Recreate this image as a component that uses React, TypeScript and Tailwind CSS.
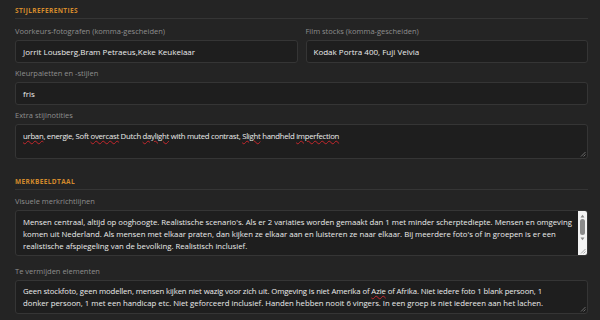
import React from 'react';

const font = { fontFamily: '"Open Sans", "Noto Sans", sans-serif' };

function SectionTitle({ children }: { children: React.ReactNode }) {
  return (
    <div className="border-b border-[#353535] pb-[3px]">
      <div className="text-[6.5px] font-bold uppercase tracking-[0.06em] text-[#d38a2c] leading-[9px]">{children}</div>
    </div>
  );
}

function Label({ children }: { children: React.ReactNode }) {
  return <div className="text-[7.5px] leading-[10px] text-[#8e8e8e]">{children}</div>;
}

function Input({ value }: { value: string }) {
  return (
    <div className="h-[23px] rounded-[3px] border border-[#353535] bg-[#1e1e1e] px-[7px] flex items-center text-[8px] text-[#ececec] whitespace-nowrap">
      {value}
    </div>
  );
}

function Grip() {
  return (
    <svg className="absolute right-[1px] bottom-[1px]" width="6" height="6" viewBox="0 0 6 6">
      <path d="M5.5 1 L1 5.5 M5.5 3.5 L3.5 5.5" stroke="#8a8a8a" strokeWidth="0.7" />
    </svg>
  );
}

function Wavy({ children }: { children: React.ReactNode }) {
  return <span className="underline decoration-wavy decoration-[#c4262b] decoration-[0.5px] underline-offset-[1px]">{children}</span>;
}

function Area({ lines, className, scroll }: { lines: React.ReactNode[]; className: string; scroll?: boolean }) {
  return (
    <div className={`relative rounded-[3px] border border-[#353535] bg-[#1e1e1e] pl-[7px] pr-[11px] text-[7.75px] leading-[12px] text-[#ececec] overflow-hidden ${className}`}>
      {lines.map((l, i) => (
        <div key={i} className="whitespace-nowrap">{l}</div>
      ))}
      {scroll && (
        <div className="absolute right-0 top-0 bottom-0 w-[9px] bg-[#f3f3f3] flex flex-col items-center pt-[3px]">
          <svg width="5" height="4" viewBox="0 0 5 4"><path d="M0.5 3.5 L2.5 0.8 L4.5 3.5 Z" fill="#8a8a8a" /></svg>
          <div className="mt-[1px] w-[5px] h-[16px] rounded-[3px] bg-[#8b8b8b]" />
          <svg className="mt-[2px]" width="5" height="4" viewBox="0 0 5 4"><path d="M0.5 0.5 L2.5 3.2 L4.5 0.5 Z" fill="#8a8a8a" /></svg>
        </div>
      )}
      <Grip />
    </div>
  );
}

export default function App() {
  return (
    <div className="w-[600px] h-[320px] overflow-hidden bg-[#242424] pl-[15px] pr-[12px] pt-[6px]" style={font}>
      <SectionTitle>Stijlreferenties</SectionTitle>

      <div className="mt-[7px] grid grid-cols-2 gap-[8px]">
        <div>
          <Label>Voorkeurs-fotografen (komma-gescheiden)</Label>
          <div className="mt-[4px]"><Input value="Jorrit Lousberg,Bram Petraeus,Keke Keukelaar" /></div>
        </div>
        <div>
          <Label>Film stocks (komma-gescheiden)</Label>
          <div className="mt-[4px]"><Input value="Kodak Portra 400, Fuji Velvia" /></div>
        </div>
      </div>

      <div className="mt-[5px]">
        <Label>Kleurpaletten en -stijlen</Label>
        <div className="mt-[4px]"><Input value="fris" /></div>
      </div>

      <div className="mt-[5px]">
        <Label>Extra stijlnotities</Label>
        <Area
          className="mt-[4px] h-[35px] pt-[5px]"
          lines={[
            <span className="tracking-[-0.035em]">
              <Wavy>urban</Wavy>, energie, Soft <Wavy>overcast</Wavy> Dutch <Wavy>daylight</Wavy> with muted contrast, <Wavy>Slight</Wavy> handheld <Wavy>imperfection</Wavy>
            </span>,
          ]}
        />
      </div>

      <div className="mt-[18px]">
        <SectionTitle>Merkbeeldtaal</SectionTitle>
      </div>

      <div className="mt-[6px]">
        <Label>Visuele merkrichtlijnen</Label>
        <Area
          scroll
          className="mt-[4px] h-[46px] pt-[5px]"
          lines={[
            "Mensen centraal, altijd op ooghoogte. Realistische scenario's. Als er 2 variaties worden gemaakt dan 1 met minder scherptediepte. Mensen en omgeving",
            "komen uit Nederland. Als mensen met elkaar praten, dan kijken ze elkaar aan en luisteren ze naar elkaar. Bij meerdere foto's of in groepen is er een",
            'realistische afspiegeling van de bevolking. Realistisch inclusief.',
          ]}
        />
      </div>

      <div className="mt-[10px]">
        <Label>Te vermijden elementen</Label>
        <Area
          className="mt-[4px] h-[34px] pt-[4px]"
          lines={[
            <span className="tracking-[-0.015em]">
              Geen stockfoto, geen modellen, mensen kijken niet wazig voor zich uit. Omgeving is niet Amerika of <Wavy>Azie</Wavy> of Afrika. Niet iedere foto 1 blank persoon, 1
            </span>,
            'donker persoon, 1 met een handicap etc. Niet geforceerd inclusief. Handen hebben nooit 6 vingers. In een groep is niet iedereen aan het lachen.',
          ]}
        />
      </div>
    </div>
  );
}
